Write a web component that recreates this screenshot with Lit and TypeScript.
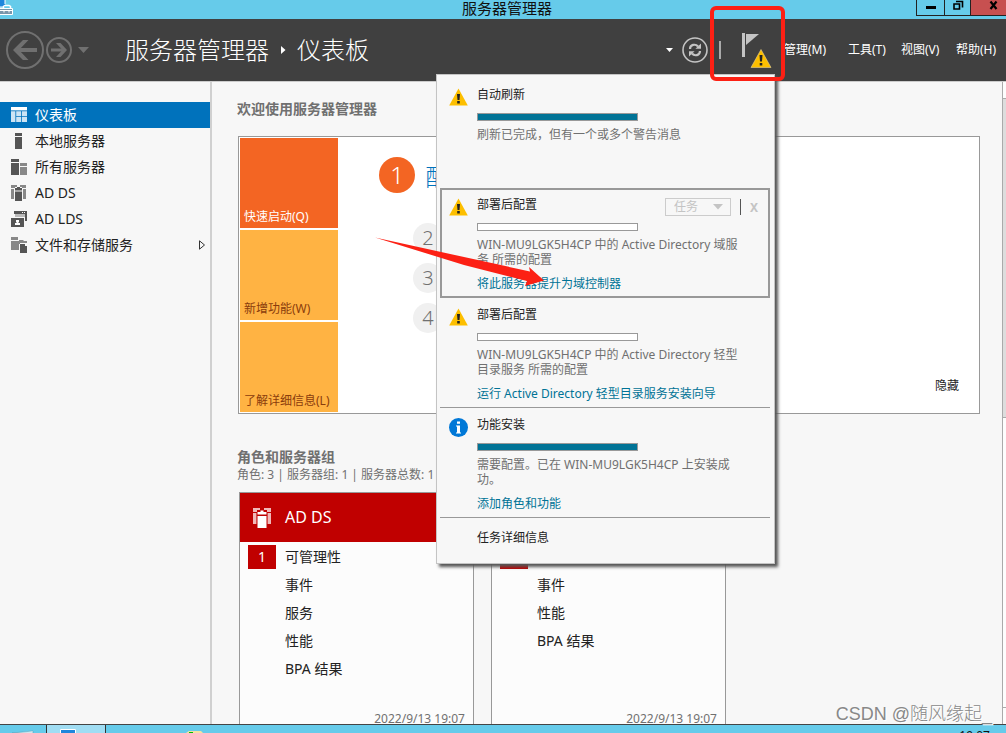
import { LitElement, html, css, svg, nothing, TemplateResult } from "lit";
import { customElement, property } from "lit/decorators.js";

const warningIcon = html`<svg class="status" width="19" height="18" viewBox="0 0 19 18" aria-label="警告">
  <path d="M9.5 .5 L18.8 17.5 H.2 Z" fill="#fdbf00" />
  <path d="M8 6 h3 l-.5 6 h-2 z M8.2 13 h2.6 v2.4 h-2.6z" fill="#222" />
</svg>`;

const infoIcon = html`<svg class="status" width="19" height="19" viewBox="0 0 19 19" aria-label="信息">
  <circle cx="9.5" cy="9.5" r="9.5" fill="#0078d7" />
  <path d="M8 3.4h3v2.4H8z M7 7.4h4v7h1v1.2H7v-1.2h1V8.6H7z" fill="#fff" />
</svg>`;

interface NavItem {
  label: string;
  icon: TemplateResult;
  active?: boolean;
  more?: boolean;
}

const navItems: NavItem[] = [
  {
    label: "仪表板",
    active: true,
    icon: svg`<path fill="#fff" d="M0 0h16v3.4H0z"/><path fill="#cde4f4" d="M0 4.2h4.4V15H0z M5.2 4.2h5v5h-5z M11 4.2h5v5h-5z M5.2 10h5v5h-5z M11 10h5v5h-5z"/>`,
  },
  {
    label: "本地服务器",
    icon: svg`<path fill="#555" d="M4 0h7v3H4z M4 4h7v12H4z"/>`,
  },
  {
    label: "所有服务器",
    icon: svg`<path fill="#555" d="M0 0h8v3H0z M0 4h8v12H0z"/><path fill="#888" d="M9 4h7v3H9z M9 8h7v8H9z"/>`,
  },
  {
    label: "AD DS",
    icon: svg`<path fill="#888" d="M0 0h6v2H4v1H0z M9 0h6v3h-4V2H9z M0 4h3v10H0z M12 4h3v10h-3z"/><path fill="#555" d="M4 3h2V2h3v1h2v2.4H4z M4 6.4h7V16H4z"/>`,
  },
  {
    label: "AD LDS",
    icon: svg`<path fill="#555" d="M3 0h13v10h-2V3H3z"/><path fill="#bbb" d="M4 3h10v3H4z"/><path fill="#fff" d="M11 1h1v1h-1z M13 1h1v1h-1z"/><path fill="#555" d="M0 7h13v9H0z"/><path fill="#fff" d="M5 9h3v2.4H7V12h2v2H4v-2h2v-.6H5z"/>`,
  },
  {
    label: "文件和存储服务",
    more: true,
    icon: svg`<path fill="#888" d="M0 0h7v3H0z M0 4h8v9H0z M9 3h3l1 1h3v2H9z"/><path fill="#888" d="M9 3h-1v4h1z"/><path fill="#555" d="M9 7h5l2 2v7H9z"/><path fill="#f7f7f7" d="M14 6l2 2v1h-2z"/>`,
  },
];

@customElement("task-entry")
class TaskEntry extends LitElement {
  @property() heading = "";
  @property() text = "";
  @property() action = "";
  @property({ type: Boolean }) info = false;
  @property({ type: Number }) progress = 0;
  @property({ type: Boolean, reflect: true }) selected = false;

  static styles = css`
    :host {
      display: block;
      min-height: 110px;
      box-sizing: border-box;
      border-bottom: 1px solid #999;
    }
    :host([plain]) {
      border-bottom-color: transparent;
    }
    :host([selected]) {
      outline: 2px solid #999;
      outline-offset: -2px;
      border-bottom-color: transparent;
    }
    .entry {
      display: grid;
      grid-template-columns: 28px 1fr;
      padding: 9px 16px 0 9px;
      font-size: 12px;
      color: #707070;
    }
    .status {
      margin-top: 1px;
    }
    .top {
      display: flex;
      height: 16px;
      line-height: 16px;
      color: #222;
    }
    .top h3 {
      flex: 1;
      margin: 0;
      font: inherit;
    }
    .tools {
      display: flex;
      align-items: center;
      gap: 9px;
      height: 20px;
      margin-right: -4px;
    }
    .pick {
      display: flex;
      align-items: center;
      position: relative;
    }
    .pick select {
      appearance: none;
      width: 66px;
      height: 18px;
      padding: 0 8px;
      border: 1px solid #ccc;
      border-radius: 0;
      background: transparent;
      font: inherit;
      line-height: 16px;
      color: #c4c4c4;
      opacity: 1;
    }
    .pick svg {
      position: absolute;
      right: 8px;
    }
    .rule {
      width: 1px;
      height: 16px;
      background: #555;
    }
    .close {
      padding: 0;
      border: 0;
      background: none;
      font: bold 12px "Noto Sans", sans-serif;
      color: #c4c4c4;
    }
    .bar {
      width: 161px;
      height: 8px;
      box-sizing: border-box;
      margin: 10px 0 6px;
      border: 1px solid #999;
      background: #fff;
    }
    .fill {
      height: 100%;
      background: #007396;
    }
    p {
      margin: 0 10px 0 0;
      line-height: 15px;
    }
    a {
      display: inline-block;
      margin-top: 9px;
      line-height: 16px;
      color: #007396;
      text-decoration: none;
    }
  `;

  render() {
    return html`<section class="entry">
      ${this.info ? infoIcon : warningIcon}
      <div>
        <div class="top">
          <h3>${this.heading}</h3>
          ${this.selected
            ? html`<div class="tools">
                <label class="pick">
                  <select disabled aria-label="任务"><option>任务</option></select>
                  <svg width="10" height="6" viewBox="0 0 10 6" aria-hidden="true"><path d="M0 0h10L5 5.6z" fill="#c4c4c4" /></svg>
                </label>
                <span class="rule"></span>
                <button class="close" disabled aria-label="关闭">X</button>
              </div>`
            : nothing}
        </div>
        <div class="bar"><div class="fill" style="width:${this.progress}%"></div></div>
        <p>${this.text}</p>
        ${this.action ? html`<a href="#">${this.action}</a>` : nothing}
      </div>
    </section>`;
  }
}

@customElement("role-card")
class RoleCard extends LitElement {
  @property() heading = "";
  @property() stamp = "";
  @property({ type: Array }) rows: string[] = [];

  static styles = css`
    :host {
      display: flex;
      flex-direction: column;
      box-sizing: border-box;
      border: 1px solid #999;
      background: #fcfcfc;
      font-size: 14px;
      color: #222;
    }
    h3 {
      display: grid;
      grid-template-columns: 33px 1fr;
      align-items: center;
      height: 49px;
      margin: 0;
      padding-left: 12px;
      background: #c00000;
      font-size: 16px;
      font-weight: 400;
      color: #fff;
    }
    h3 span,
    .name {
      padding-bottom: 2px;
    }
    ul {
      flex: 1;
      margin: 0;
      padding: 1px 0 0 8px;
      list-style: none;
    }
    li {
      display: grid;
      grid-template-columns: 28px 1fr;
      column-gap: 9px;
      align-items: center;
      height: 28px;
    }
    .count {
      grid-column: 1;
      height: 24px;
      line-height: 24px;
      background: #c00000;
      color: #fff;
      text-align: center;
    }
    .name {
      grid-column: 2;
    }
    time {
      padding: 0 8px 16px;
      text-align: right;
      font-size: 12px;
      line-height: 16px;
      color: #707070;
    }
  `;

  render() {
    return html`
      <h3>
        <svg width="20" height="20" viewBox="0 0 20 20" aria-hidden="true">
          <path fill="#f0b8b8" d="M1 0h7v2H5v2H1z M12 0h7v4h-4V2h-3z M1 5h3.4v11H1z M15.6 5H19v11h-3.400z" />
          <path fill="#fff" d="M5.500 4h3V2.500h3V4h3v2.600h-9z M5.500 8h9v12h-9z" />
        </svg>
        <span>${this.heading}</span>
      </h3>
      <ul>
        ${this.rows.map(
          (row, i) => html`<li>
            ${i === 0 ? html`<span class="count">1</span>` : nothing}
            <span class="name">${row}</span>
          </li>`
        )}
      </ul>
      <time>${this.stamp}</time>
    `;
  }
}

@customElement("app-root")
class AppRoot extends LitElement {
  static styles = css`
    :host {
      display: flex;
      flex-direction: column;
      height: 100vh;
      overflow: hidden;
      position: relative;
      background: #f7f7f7;
      font-family: "Noto Sans", "Noto Sans CJK SC", sans-serif;
      font-size: 12px;
      color: #222;
    }
    button {
      padding: 0;
      border: 0;
      background: none;
      font: inherit;
      color: inherit;
    }
    svg {
      display: block;
    }
    a {
      text-decoration: none;
    }

    .titlebar {
      display: grid;
      grid-template-columns: 1fr auto 1fr;
      align-items: start;
      height: 19px;
      background: #66cbea;
      color: #111;
    }
    .titlebar h1 {
      margin: 0;
      padding-left: 8px;
      font-size: 15px;
      font-weight: 400;
      line-height: 16px;
    }
    .window {
      justify-self: end;
      display: grid;
      grid-template-columns: 28px 26px 36px;
      height: 16px;
    }
    .window button {
      display: flex;
      justify-content: center;
      border: solid #222;
      border-width: 0 0 1px 1px;
    }
    .window .quit {
      padding-left: 10px;
      background: #c75050;
    }

    .header {
      display: flex;
      align-items: center;
      height: 62px;
      padding: 0 10px 0 6px;
      position: relative;
      background: #404040;
      color: #fff;
    }
    .history {
      display: flex;
      align-items: center;
      gap: 2px;
    }
    .crumbs {
      display: flex;
      flex: 1;
      align-items: center;
      gap: 11px;
      margin-left: 34px;
      font-size: 24px;
      font-weight: 300;
      line-height: 32px;
    }
    .actions {
      display: flex;
      align-items: center;
      margin-right: 12px;
    }
    .actions .refresh {
      margin: 0 11px 0 9px;
    }
    .actions .rule {
      width: 2px;
      height: 18px;
      margin-right: 20px;
      background: #aaa;
    }
    .menus {
      display: grid;
      grid-template-columns: 64px 53px 55px auto;
      justify-items: start;
      line-height: 20px;
    }

    .body {
      display: flex;
      flex: 1;
      min-height: 0;
      border-top: 1px solid #ccc;
    }
    .side {
      flex: none;
      width: 210px;
      padding-top: 20px;
      border-right: 2px solid #d0d0d0;
    }
    .side a {
      display: grid;
      grid-template-columns: 16px 1fr auto;
      column-gap: 8px;
      align-items: center;
      height: 26px;
      padding: 0 4px 0 11px;
      font-size: 14px;
      color: #222;
    }
    .side span {
      padding-bottom: 2px;
    }
    .side .active {
      background: #0072bc;
      color: #fff;
    }
    .main {
      flex: 1;
      min-width: 0;
      padding: 17px 22px 0 25px;
      overflow: hidden;
    }
    h2 {
      margin: 0;
      font-size: 14px;
      font-weight: 700;
      line-height: 20px;
      color: #707070;
    }
    .welcome {
      display: grid;
      grid-template-columns: 98px 1fr auto;
      min-height: 278px;
      box-sizing: border-box;
      margin: 17px 0 33px 1px;
      padding: 1px;
      border: 1px solid #999;
      background: #fff;
    }
    .tiles {
      display: grid;
      grid-auto-rows: 1fr;
      row-gap: 2px;
    }
    .tiles button {
      display: flex;
      align-items: end;
      padding: 0 4px 2px;
      line-height: 18px;
      background: #ffb343;
      color: #8a3c0c;
    }
    .tiles .current {
      background: #f36523;
      color: #fff;
    }
    .steps {
      margin: 0;
      padding: 19px 0 0 41px;
      list-style: none;
    }
    .steps li {
      display: flex;
      align-items: center;
      gap: 10px;
      height: 40px;
      padding-left: 34px;
    }
    .steps .first {
      height: 36px;
      padding: 0 0 25px;
      font-size: 24px;
      font-weight: 300;
    }
    .steps a {
      color: #0072bc;
    }
    .num {
      width: 30px;
      height: 30px;
      border-radius: 50%;
      background: #f0f0f0;
      font-size: 20px;
      font-weight: 300;
      line-height: 30px;
      text-align: center;
      color: #707070;
    }
    .first .num {
      width: 36px;
      height: 36px;
      background: #f36523;
      font-size: 24px;
      line-height: 36px;
      color: #fff;
    }
    .hide {
      align-self: end;
      margin: 0 19px 17px;
      line-height: 18px;
    }
    .summary {
      margin: 0 0 10px;
      line-height: 15px;
      color: #707070;
    }
    .cards {
      display: grid;
      grid-template-columns: repeat(auto-fill, 235px);
      gap: 17px;
      min-height: 252px;
      padding-left: 2px;
    }
    .scroll {
      display: flex;
      flex-direction: column;
      flex: none;
      width: 3px;
      border-left: 1px solid #aaa;
      background: #fdfdfd;
    }
    .scroll .up {
      height: 16px;
    }
    .scroll .thumb {
      height: 318px;
      border: solid #aaa;
      border-width: 1px 0 1px 0;
      background: #ddd;
    }
    .scroll .down {
      height: 16px;
      margin-top: auto;
      border-top: 1px solid #aaa;
    }

    .taskbar {
      display: flex;
      flex: none;
      height: 8px;
      overflow: hidden;
      border-top: 1px solid #444;
      background: #66cbea;
      color: #111;
    }
    .taskbar .app {
      width: 58px;
      border: solid #333;
      border-width: 0 1px;
      background: #a0ddf3;
    }
    .taskbar time {
      margin-left: auto;
      padding: 5px 16px 0 0;
      line-height: 12px;
    }

    .popup {
      position: absolute;
      z-index: 2;
      top: 55px;
      right: 231px;
      width: 339px;
      box-sizing: border-box;
      padding: 3px 4px 0 3px;
      border: 1px solid #c4c4c4;
      background: #f7f7f7;
      box-shadow: 3px 3px 3px #555;
      color: #222;
    }
    .details {
      display: block;
      padding: 10px 37px 16px;
      line-height: 19px;
      color: #222;
    }
    .pointer {
      position: absolute;
      left: -63px;
      top: 161px;
    }
    .marker {
      position: absolute;
      z-index: 3;
      top: 6px;
      right: 221px;
      width: 67px;
      height: 67px;
      border: 4px solid #fc2014;
      border-radius: 6px;
    }
    .credit {
      position: absolute;
      right: 14px;
      bottom: 7px;
      font-family: "Liberation Sans", "Noto Sans CJK SC", sans-serif;
      font-size: 18px;
      font-weight: 300;
      line-height: 24px;
      color: #888;
      text-shadow: 1px 1px 0 #fff;
    }
  `;

  render() {
    return html`
      <div class="titlebar">
        <svg width="14" height="16" viewBox="0 0 14 16" aria-hidden="true">
          <path d="M0 0h5v7H0z" fill="#1f86dc" />
          <path d="M5 0v4M0 7h3" stroke="#fff" fill="none" />
          <path d="M3.500 8.500V6.500L5 5.500h4l1.500 1v2" stroke="#fff" stroke-width="1.500" fill="none" />
          <path d="M-1 8.500h13.500v6H-1z" fill="#7896ab" stroke="#fff" />
          <path d="M0 10.500h12M4 10v2.500M9 10v2.500" stroke="#fff" />
        </svg>
        <h1>服务器管理器</h1>
        <div class="window">
          <button aria-label="最小化"><svg width="12" height="12" viewBox="0 0 12 12"><path d="M1 6h10v3H1z" fill="#000" /></svg></button>
          <button aria-label="还原"><svg width="12" height="12" viewBox="0 0 12 12"><path d="M4 1.500h6.500v6M2 4h5.500v5H2z" fill="none" stroke="#000" stroke-width="1.600" /></svg></button>
          <button class="quit" aria-label="关闭"><svg width="12" height="12" viewBox="0 0 12 12"><path d="M2.500 1.500l6 7.500M8.500 1.500l-6 7.500" stroke="#000" stroke-width="2.200" /></svg></button>
        </div>
      </div>

      <header class="header">
        <div class="history">
          <button aria-label="后退">
            <svg width="38" height="38" viewBox="0 0 38 38" fill="none" stroke="#707070">
              <circle cx="19" cy="19" r="18" stroke-width="2" />
              <path d="M31 19H10" stroke-width="4" /><path d="M17 9h5.500L13 19l9.500 10H17L7 19z" fill="#707070" stroke="none" />
            </svg>
          </button>
          <button aria-label="前进">
            <svg width="26" height="26" viewBox="0 0 26 26" fill="none" stroke="#707070">
              <circle cx="13" cy="13" r="12" stroke-width="2" />
              <path d="M5 13h14" stroke-width="3" /><path d="M14.500 6H10l6.500 7-6.500 7h4.500l6.500-7z" fill="#707070" stroke="none" />
            </svg>
          </button>
          <button aria-label="历史记录">
            <svg width="17" height="8" viewBox="0 0 17 8"><path d="M4 1h11L9.500 7z" fill="#707070" /></svg>
          </button>
        </div>
        <nav class="crumbs">
          <span>服务器管理器</span>
          <svg width="6" height="10" viewBox="0 0 6 10" aria-hidden="true"><path d="M1 1l4.500 4L1 9z" fill="#fff" /></svg>
          <span>仪表板</span>
        </nav>
        <div class="actions">
          <button aria-label="更多"><svg width="7" height="4" viewBox="0 0 7 4"><path d="M0 0h7L3.500 4z" fill="#fff" /></svg></button>
          <button class="refresh" aria-label="刷新">
            <svg width="26" height="26" viewBox="0 0 26 26" fill="none" stroke="#c4c4c4">
              <circle cx="13" cy="13" r="12" stroke-width="1.600" />
              <path d="M8 12c0-4.500 5.500-5.500 8-2.500M18 14c0 4.500-5.500 5.500-8 2.500" stroke-width="2.200" />
              <path d="M19 6.500v5.300h-5.600z M7 19.500v-5.300h5.600z" fill="#c4c4c4" stroke="none" />
            </svg>
          </button>
          <span class="rule"></span>
          <button aria-label="通知">
            <svg width="31" height="36" viewBox="0 0 31 36">
              <path d="M1 1h3v24H1z" fill="#c4c4c4" /><path d="M5 2h13L5 13z" fill="#c4c4c4" />
              <path d="M20 17.500l10 18H10z" fill="#fdbf00" stroke="#e8d090" stroke-width=".6" />
              <path d="M18.500 23h3l-.5 6.500h-2z M18.700 31h2.600v2.500h-2.600z" fill="#222" />
            </svg>
          </button>
        </div>
        <nav class="menus">
          <button>管理(M)</button>
          <button>工具(T)</button>
          <button>视图(V)</button>
          <button>帮助(H)</button>
        </nav>

        <div class="popup">
          <task-entry plain heading="自动刷新" progress="100" text="刷新已完成，但有一个或多个警告消息"></task-entry>
          <task-entry selected heading="部署后配置" text="WIN-MU9LGK5H4CP 中的 Active Directory 域服务 所需的配置" action="将此服务器提升为域控制器"></task-entry>
          <task-entry heading="部署后配置" text="WIN-MU9LGK5H4CP 中的 Active Directory 轻型目录服务 所需的配置" action="运行 Active Directory 轻型目录服务安装向导"></task-entry>
          <task-entry info heading="功能安装" progress="100" text="需要配置。已在 WIN-MU9LGK5H4CP 上安装成功。" action="添加角色和功能"></task-entry>
          <a class="details" href="#">任务详细信息</a>
          <svg class="pointer" width="175" height="56" viewBox="0 0 175 56" aria-hidden="true">
            <path d="M1 1.500L156 35.500L155 31L170 44.500L151 50L153 45L90 29z" fill="#fc2014" />
          </svg>
        </div>
      </header>

      <div class="body">
        <nav class="side">
          ${navItems.map(
            (item) => html`<a href="#" class=${item.active ? "active" : ""}>
              <svg width="16" height="16" viewBox="0 0 16 16" aria-hidden="true">${item.icon}</svg>
              <span>${item.label}</span>
              ${item.more
                ? html`<svg width="8" height="10" viewBox="0 0 8 10" aria-hidden="true"><path d="M1.500 .8l5 4.200-5 4.200z" fill="none" stroke="#333" /></svg>`
                : nothing}
            </a>`
          )}
        </nav>
        <main class="main">
          <h2>欢迎使用服务器管理器</h2>
          <section class="welcome">
            <div class="tiles">
              <button class="current">快速启动(Q)</button>
              <button>新增功能(W)</button>
              <button>了解详细信息(L)</button>
            </div>
            <ol class="steps">
              <li class="first"><span class="num">1</span><a href="#">配置此本地服务器</a></li>
              <li><span class="num">2</span></li>
              <li><span class="num">3</span></li>
              <li><span class="num">4</span></li>
            </ol>
            <button class="hide">隐藏</button>
          </section>
          <h2>角色和服务器组</h2>
          <p class="summary">角色: 3 | 服务器组: 1 | 服务器总数: 1</p>
          <div class="cards">
            <role-card heading="AD DS" stamp="2022/9/13 19:07" .rows=${["可管理性", "事件", "服务", "性能", "BPA 结果"]}></role-card>
            <role-card heading="AD LDS" stamp="2022/9/13 19:07" .rows=${["可管理性", "事件", "性能", "BPA 结果"]}></role-card>
          </div>
        </main>
        <div class="scroll"><div class="up"></div><div class="thumb"></div><div class="down"></div></div>
      </div>

      <footer class="taskbar">
        <svg width="46" height="8" viewBox="0 0 46 8" aria-hidden="true"><path d="M12 8L33 6v2z" fill="#fff" stroke="#4a9ab4" stroke-width=".5" /></svg>
        <span class="app"><svg width="34" height="8" viewBox="0 0 34 8" aria-hidden="true"><path d="M13.500 9V4.500h15V9" fill="#1f86dc" stroke="#fff" /></svg></span>
        <svg width="100" height="8" viewBox="0 0 100 8" aria-hidden="true"><path d="M80 8l3-2h12l2 2z" fill="#f3e3a0" /><path d="M83 7h4v1h-4z" fill="#0b0" /></svg>
        <time>19:07</time>
      </footer>

      <div class="marker"></div>
      <div class="credit">CSDN @随风缘起_</div>
    `;
  }
}
